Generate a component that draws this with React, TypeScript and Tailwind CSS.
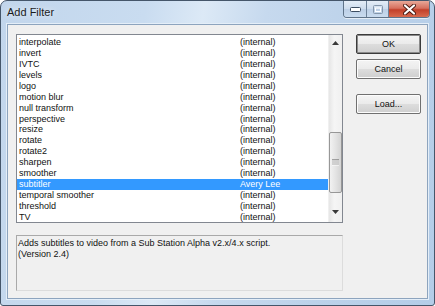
import clsx from "clsx";

type FilterRow = {
  name: string;
  author: string;
};

const FILTERS: FilterRow[] = [
  { name: "interpolate", author: "(internal)" },
  { name: "invert", author: "(internal)" },
  { name: "IVTC", author: "(internal)" },
  { name: "levels", author: "(internal)" },
  { name: "logo", author: "(internal)" },
  { name: "motion blur", author: "(internal)" },
  { name: "null transform", author: "(internal)" },
  { name: "perspective", author: "(internal)" },
  { name: "resize", author: "(internal)" },
  { name: "rotate", author: "(internal)" },
  { name: "rotate2", author: "(internal)" },
  { name: "sharpen", author: "(internal)" },
  { name: "smoother", author: "(internal)" },
  { name: "subtitler", author: "Avery Lee" },
  { name: "temporal smoother", author: "(internal)" },
  { name: "threshold", author: "(internal)" },
  { name: "TV", author: "(internal)" }
];

const SELECTED = "subtitler";

const FONT = "font-['Liberation_Sans',Arial,sans-serif]";

export default function App() {
  return (
    <div
      className={clsx(
        "flex h-[306px] w-[435px] flex-col overflow-hidden rounded-t-[7px] rounded-b-[3px] border border-[#45566a] px-[6px] pb-[6px]",
        "bg-[linear-gradient(100deg,#c2d6ec_0%,#c9dcf0_30%,#dce9f6_42%,#c6d9ee_55%,#bcd2ea_75%,#b4cde8_100%)]",
        FONT
      )}
    >
      <TitleBar />
      <div className="flex flex-1 border border-[#8da4be] bg-[#f0f0f0] pl-[8px] pr-[6px] pt-[9px] shadow-[0_0_0_1px_#e4eef8]">
        <div className="flex w-[327px] flex-col">
          <FilterList />
          <div className="mt-[12px] h-[56px] border border-[#a9a9a9] border-b-[#dcdcdc] border-r-[#dcdcdc] bg-[#f0f0f0] px-[1px] pt-[2px] text-[9px] leading-[10.5px] text-[#111]">
            <p>Adds subtitles to video from a Sub Station Alpha v2.x/4.x script.</p>
            <p>(Version 2.4)</p>
          </div>
        </div>
        <div className="ml-[13px] flex w-[65px] flex-col">
          <DialogButton label="OK" isDefault />
          <DialogButton label="Cancel" className="mt-[5px]" />
          <DialogButton label="Load..." className="mt-[15px]" />
        </div>
      </div>
    </div>
  );
}

function TitleBar() {
  return (
    <div className="flex h-[23px] items-start justify-between">
      <span className="mt-[5px] text-[11px] leading-[13px] text-[#1b1b1b] [text-shadow:0_0_6px_rgba(255,255,255,0.9)]">
        Add Filter
      </span>
      <div className="-mr-[2px] flex h-[17px] overflow-hidden rounded-b-[4px] border border-t-0 border-[#5f7389] shadow-[0_1px_0_rgba(255,255,255,0.6)]">
        <div className="flex w-[23px] items-center justify-center border-r border-[#6d8198] bg-[linear-gradient(#e4edf7,#cddced_50%,#bccfe6_51%,#c9dbef)]">
          <svg width="11" height="5" viewBox="0 0 11 5">
            <rect x="0.5" y="0.5" width="10" height="4" rx="1" fill="#fff" stroke="#3c4d61" />
          </svg>
        </div>
        <div className="flex w-[22px] items-center justify-center border-r border-[#6d8198] bg-[linear-gradient(#e4edf7,#cddced_50%,#bccfe6_51%,#c9dbef)]">
          <svg width="10" height="9" viewBox="0 0 10 9">
            <rect x="0.5" y="0.5" width="9" height="8" rx="1" fill="none" stroke="#8496ab" />
            <rect x="2.5" y="3" width="5" height="3.5" fill="none" stroke="#ffffff" />
          </svg>
        </div>
        <div className="flex w-[40px] items-center justify-center bg-[linear-gradient(#e8a898,#d6705e_45%,#c2402a_55%,#d86a4e)]">
          <svg width="13" height="11" viewBox="0 0 13 11">
            <path d="M2 1.5 L11 9.5 M11 1.5 L2 9.5" stroke="#4a1a12" strokeWidth="4" strokeLinecap="round" />
            <path d="M2 1.5 L11 9.5 M11 1.5 L2 9.5" stroke="#ffffff" strokeWidth="2.2" strokeLinecap="round" />
          </svg>
        </div>
      </div>
    </div>
  );
}

function FilterList() {
  return (
    <div className="flex h-[189px] border border-[#828790] bg-white">
      <div className="flex-1 overflow-hidden pt-[2px] text-[9px] leading-[11px]">
        {FILTERS.map((row) => {
          const selected = row.name === SELECTED;
          return (
            <div
              key={row.name}
              className={clsx(
                "flex h-[10.94px] items-center",
                selected ? "bg-[#3399ff] text-white" : "text-[#111]"
              )}
            >
              <span className="w-[223px] pl-[2px]">{row.name}</span>
              <span>{row.author}</span>
            </div>
          );
        })}
      </div>
      <ScrollBar />
    </div>
  );
}

function ScrollBar() {
  return (
    <div className="flex w-[14px] flex-col bg-[linear-gradient(90deg,#e6e6e6,#f5f5f5_40%,#f0f0f0)] border-l border-[#f0f0f0]">
      <div className="flex h-[15px] items-center justify-center">
        <svg width="7" height="4" viewBox="0 0 7 4">
          <path d="M0 4 L3.5 0 L7 4 Z" fill="#3a3a3a" />
        </svg>
      </div>
      <div className="mt-[82px] flex h-[61px] items-center justify-center rounded-[2px] border border-[#979797] bg-[linear-gradient(90deg,#f2f2f2,#e4e4e4_50%,#d4d4d4)] mx-[0px]">
        <svg width="7" height="7" viewBox="0 0 7 7">
          <path d="M0 1 H7 M0 3 H7 M0 5 H7" stroke="#5a5a5a" strokeWidth="1" />
          <path d="M0 2 H7 M0 4 H7 M0 6 H7" stroke="#ffffff" strokeWidth="1" />
        </svg>
      </div>
      <div className="flex flex-1 items-center justify-center pb-[2px]">
        <svg width="7" height="4" viewBox="0 0 7 4" className="mt-[10px]">
          <path d="M0 0 L7 0 L3.5 4 Z" fill="#3a3a3a" />
        </svg>
      </div>
    </div>
  );
}

type DialogButtonProps = {
  label: string;
  isDefault?: boolean;
  className?: string;
};

function DialogButton({ label, isDefault, className }: DialogButtonProps) {
  return (
    <button
      type="button"
      className={clsx(
        "flex h-[20px] w-full items-center justify-center rounded-[2px] border text-[9px] leading-[10px] text-[#111]",
        "bg-[linear-gradient(#f4f4f4,#ebebeb_48%,#dddddd_52%,#cfcfcf)]",
        isDefault
          ? "border-[#3b3b3b] shadow-[inset_0_0_0_1px_#8a8a8a]"
          : "border-[#707070] shadow-[inset_0_0_0_1px_#fcfcfc]",
        className
      )}
    >
      {label}
    </button>
  );
}
